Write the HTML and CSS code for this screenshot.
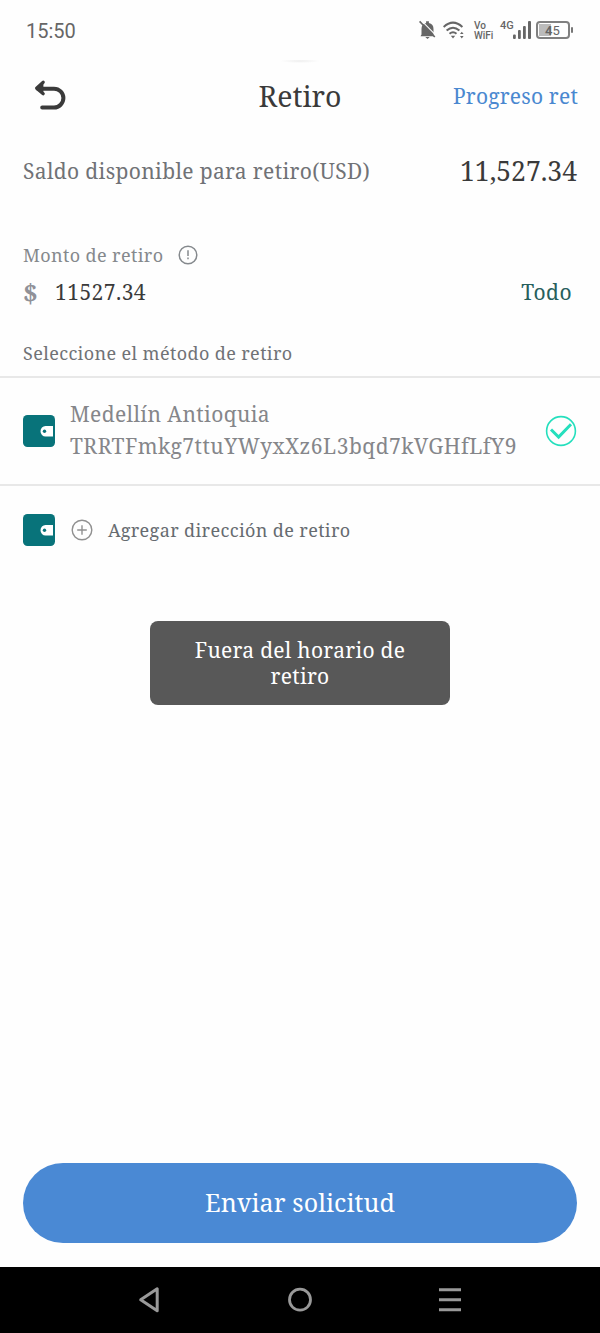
FILE: index.html
```html
<!DOCTYPE html>
<html lang="es">
<head>
<meta charset="utf-8">
<title>Retiro</title>
<link rel="stylesheet" href="styles.css">
</head>
<body>
<div class="screen">
  <div class="status">
    <span class="clock">15:50</span>
    <div class="indicators">
      <svg class="bell" width="18" height="20" viewBox="0 0 18 20"><path d="M2.5 14.5V9a6 6 0 0 1 4.6-5.9V1.3h2.8v1.8A6 6 0 0 1 14.5 9v5.5l1 1.7h-14z" fill="#666"/><path d="M6.3 17h4.4l-2.2 2z" fill="#666"/><path d="M2 .2 17 15.4" stroke="#fefefe" stroke-width="1.1"/><path d="M.6 1.4 15.8 17" stroke="#666" stroke-width="1.6"/></svg>
      <svg class="wifi" width="22" height="19" viewBox="0 0 22 19" fill="none" stroke="#666" stroke-width="2"><path d="M.6 6Q10 -2.7 19.4 6M3.6 9.6Q10 3.8 16.4 9.6M6.5 12.8Q10 9.8 13.5 12.8"/><path d="M7.8 14.8h4.4L10 17.6z" fill="#666" stroke="none"/><path d="M17 13 18.8 10.8 20.6 13zM17 15h3.6L18.8 17.4z" fill="#666" stroke="none"/></svg>
      <span class="vowifi"><span>Vo</span><span>WiFi</span></span>
      <span class="network">4G</span>
      <svg class="signal" width="18" height="18" viewBox="0 0 18 18" fill="#666"><rect x="0" y="13.5" width="2.8" height="4.5" rx="1"/><rect x="5" y="9" width="2.8" height="9" rx="1"/><rect x="10" y="5" width="2.8" height="13" rx="1"/><rect x="15" y="0" width="3" height="18" rx="1"/></svg>
      <div class="battery"><span class="charge"></span><span class="percent"><b>4</b>5</span></div>
    </div>
  </div>

  <header class="header">
    <svg class="back" width="32" height="32" viewBox="0 0 32 32" fill="none" stroke="#3a3a3a" stroke-width="4" stroke-linecap="round" stroke-linejoin="round"><path d="M4 9.7h16a9.4 9.4 0 0 1 0 18.8H8.2"/><path d="M9.4 3.2 2.8 9.2 9.4 15Z" fill="#3a3a3a" stroke="none"/><path d="M9.2 3.2 2.6 9.2 9.2 14.8" stroke-width="3.2"/></svg>
    <h1 class="title">Retiro</h1>
    <a class="progress">Progreso ret</a>
  </header>

  <section class="balance">
    <span class="balance-label">Saldo disponible para retiro(USD)</span>
    <span class="balance-value">11,527.34</span>
  </section>

  <section class="amount">
    <div class="amount-head">
      <span class="amount-label">Monto de retiro</span>
      <svg width="20" height="20" viewBox="0 0 20 20"><circle cx="10" cy="10" r="8.8" fill="none" stroke="#85898d" stroke-width="1.5"/><path d="M10 5.2v5.8M10 12.6v1.6" stroke="#85898d" stroke-width="1.5"/></svg>
    </div>
    <div class="amount-row">
      <span class="currency">$</span>
      <span class="amount-value">11527.34</span>
      <span class="all">Todo</span>
    </div>
  </section>

  <p class="method-title">Seleccione el método de retiro</p>

  <section class="method">
    <svg class="wallet" width="32" height="32" viewBox="0 0 32 32"><rect width="32" height="32" rx="4.5" fill="#08737a"/><path d="M30 11H22.5a5 5.3 0 0 0 0 10.6H30z" fill="#fff"/><circle cx="21.5" cy="16.3" r="1.7" fill="#08737a"/></svg>
    <div class="address">
      <span class="address-name">Medellín Antioquia</span>
      <span class="address-key">TRRTFmkg7ttuYWyxXz6L3bqd7kVGHfLfY9</span>
    </div>
    <svg class="check" width="32" height="32" viewBox="0 0 32 32" fill="none" stroke="#25dfbd"><circle cx="16" cy="16" r="14.4" stroke-width="1.6"/><path d="M6 14.5 13.6 22 26 9.2" stroke-width="3"/></svg>
  </section>

  <section class="add">
    <svg class="wallet" width="32" height="32" viewBox="0 0 32 32"><rect width="32" height="32" rx="4.5" fill="#08737a"/><path d="M30 11H22.5a5 5.3 0 0 0 0 10.6H30z" fill="#fff"/><circle cx="21.5" cy="16.3" r="1.7" fill="#08737a"/></svg>
    <svg class="plus" width="22" height="22" viewBox="0 0 22 22" fill="none" stroke="#909090" stroke-width="1.4"><circle cx="11" cy="11" r="9.8"/><path d="M6.2 11h9.6M11 6.2v9.6"/></svg>
    <span class="add-label">Agregar dirección de retiro</span>
  </section>

  <div class="toast"><span>Fuera del horario de</span><span>retiro</span></div>

  <button class="submit">Enviar solicitud</button>

  <nav class="nav">
    <svg width="24" height="28" viewBox="0 0 24 28" fill="none" stroke="#999" stroke-width="3" stroke-linejoin="round"><path d="M19.2 2.8v22L2.7 13.8z"/></svg>
    <svg width="24" height="28" viewBox="0 0 24 28" fill="none" stroke="#999" stroke-width="2.8"><circle cx="12" cy="13.7" r="10.5"/></svg>
    <svg width="24" height="28" viewBox="0 0 24 28" fill="none" stroke="#999" stroke-width="3"><path d="M1 3.7h22M1 13.7h22M1 23.7h22"/></svg>
  </nav>
</div>
</body>
</html>
```

FILE: styles.css
```css
* { box-sizing: border-box; }
body { margin: 0; background: #fefefe; }
.screen {
  display: flex;
  flex-direction: column;
  width: 600px;
  height: 1333px;
  overflow: hidden;
  font-family: "Noto Serif", "DejaVu Serif", serif;
  color: #3a3a3a;
  white-space: nowrap;
}
.status {
  display: flex;
  justify-content: space-between;
  height: 60px;
  padding: 20px 26px 0;
  font-family: Roboto, sans-serif;
  color: #666;
}
.clock { font-size: 20px; line-height: 22px; }
.indicators { display: flex; align-items: flex-start; }
.wifi { margin: 1px 0 0 6px; }
.vowifi {
  display: flex;
  flex-direction: column;
  width: 21px;
  margin: 1px 0 0 9px;
  font-size: 10px;
  font-weight: 500;
  line-height: 10px;
}
.network { width: 12px; margin-left: 5px; font-size: 11px; font-weight: 500; line-height: 12px; }
.signal { margin: 1px 0 0 1px; }
.battery {
  position: relative;
  width: 34px;
  height: 18px;
  margin: 1px 4px 0 5px;
  border: 2px solid #808080;
  border-radius: 4px;
}
.battery::after {
  content: "";
  position: absolute;
  left: 33px;
  top: 4px;
  width: 2px;
  height: 6px;
  border-radius: 1px;
  background: #777;
}
.charge { position: absolute; left: 1px; top: 1px; width: 12px; height: 12px; background: #bbb; }
.percent { position: absolute; left: 7px; top: 0; font-size: 13px; line-height: 15px; }

.header {
  display: grid;
  grid-template-columns: 1fr auto 1fr;
  align-items: center;
  height: 72px;
  padding: 0 22px 0 34px;
  background: radial-gradient(ellipse 20px 2px at 300px 1px, #eeeeee, #fefefe);
}
.title { margin: 0 12px 0 0; font-size: 28.5px; font-weight: 400; line-height: 40px; }
.back { margin-top: -3px; }
.progress { justify-self: end; font-size: 21px; letter-spacing: 0.2px; color: #4a88d0; }

.balance {
  display: flex;
  align-items: center;
  justify-content: space-between;
  height: 78px;
  padding: 0 23px;
}
.balance-label { font-size: 21px; letter-spacing: 0.35px; color: #707276; }
.balance-value { font-size: 26.5px; }

.amount { height: 104px; padding: 33px 28px 0 23px; }
.amount-head { display: flex; align-items: center; gap: 15px; height: 24px; }
.amount-label { font-size: 18px; letter-spacing: 0.38px; color: #85898d; }
.amount-row { display: flex; align-items: center; height: 50px; }
.currency { width: 32px; font-size: 26px; line-height: 30px; font-weight: 700; color: #909198; }
.amount-value { font-size: 21px; letter-spacing: 0.45px; }
.all { margin-left: auto; font-size: 21px; letter-spacing: 0.45px; color: #275f5c; }

.method-title {
  height: 62px;
  margin: 0;
  padding: 27px 23px 0;
  font-size: 18px;
  line-height: 24px;
  letter-spacing: 0.38px;
  color: #707276;
}
.method {
  display: flex;
  align-items: center;
  height: 110px;
  padding: 0 23px;
  border-top: 2px solid #e8e8e8;
  border-bottom: 2px solid #e8e8e8;
}
.address {
  display: flex;
  flex-direction: column;
  margin: -2px 0 0 15px;
  font-size: 21px;
  line-height: 32px;
  color: #85868a;
}
.address-name { letter-spacing: 0.38px; }
.address-key { letter-spacing: 0.5px; font-variant-ligatures: none; }
.check { margin-left: auto; }
.add { display: flex; align-items: center; height: 88px; padding: 0 23px; }
.plus { margin-left: 16px; }
.add-label { margin-left: 15px; font-size: 18px; letter-spacing: 0.37px; color: #666b70; }
.toast {
  display: flex;
  flex-direction: column;
  align-items: center;
  align-self: center;
  width: 300px;
  height: 84px;
  margin-top: 47px;
  padding-top: 16px;
  border-radius: 8px;
  background: #585858;
  color: #fff;
  font-size: 21px;
  line-height: 26px;
  letter-spacing: 0.28px;
}
.submit {
  height: 80px;
  margin: auto 23px 24px;
  padding: 0 0 2px;
  border: 0;
  border-radius: 40px;
  background: #4a89d4;
  color: #fff;
  font: inherit;
  font-size: 25px;
  letter-spacing: 0.1px;
}
.nav {
  display: flex;
  align-items: center;
  justify-content: space-around;
  height: 66px;
  padding: 0 75px;
  background: #000;
}
```
